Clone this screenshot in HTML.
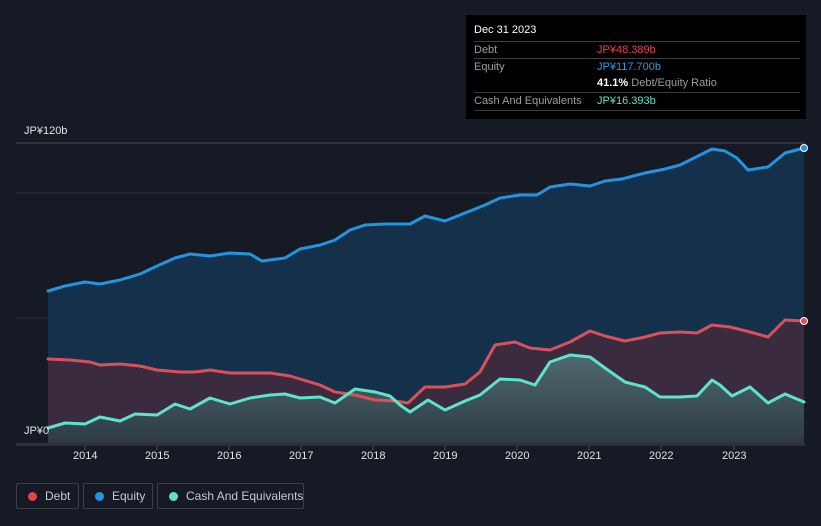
<!DOCTYPE html>
<html style="overflow:hidden;height:526px"><head><meta charset="utf-8"><style>
body{margin:0;width:821px;height:526px;background:#151a24;font-family:"Liberation Sans",sans-serif;overflow:hidden;position:relative}
.tt{position:absolute;left:466px;top:15px;width:340px;height:104px;background:#000;color:#fff;font-size:11px}
.tt .r{position:absolute;left:8px;right:6px;border-top:1px solid #3a3d42;height:17px;line-height:17px;color:#9a9ea5}
.tt span{position:absolute;left:123px}
.lg{position:absolute;top:483px;height:26px;border:1px solid #3a4049;border-radius:2px;color:#c5c9cf;font-size:12px;line-height:24px;box-sizing:border-box;white-space:nowrap}
.lg i{position:absolute;left:11px;top:8px;width:9px;height:9px;border-radius:50%}
.ax{position:absolute;top:450px;color:#e0e3e7;font-size:11px}
</style></head><body>
<svg width="821" height="526" style="position:absolute;left:0;top:0">
<defs><linearGradient id="cg" x1="0" y1="0" x2="0" y2="1"><stop offset="0" stop-color="#4e6a6e"/><stop offset="1" stop-color="#2e3a44"/></linearGradient></defs>
<line x1="16" y1="143" x2="805" y2="143" stroke="#4a4f57"/>
<line x1="16" y1="193" x2="805" y2="193" stroke="#2c323b"/>
<line x1="16" y1="318" x2="805" y2="318" stroke="#2c323b"/>
<polygon fill="#15304a" points="48,443 48,291 65,286 85,282 100,284 120,280 140,274 157,266 175,258 190,254 210,256 230,253 250,254 262,261 285,258 300,249 320,245 335,240 350,230 365,225 385,224 410,224 425,216 445,221 465,213 485,205 500,198 520,195 537,195 550,187 570,184 590,186 605,181 622,179 645,173 665,169 680,165 700,155 712,149 725,151 737,158 748,170 768,167 785,153 804,148 804,443"/>
<polygon fill="#3a2b3e" points="48,443 48,359 70,360 90,362 100,365 120,364 140,366 157,370 180,372 195,372 210,370 230,373 270,373 290,376 300,379 320,385 335,392 355,395 375,400 395,401 408,403 425,387 445,387 465,384 480,372 495,345 515,342 530,348 550,350 570,342 590,331 605,336 625,341 645,337 660,333 680,332 697,333 712,325 730,327 750,332 768,337 785,320 804,321 804,443"/>
<polygon fill="url(#cg)" points="48,443 48,428 65,423 85,424 100,417 120,421 135,414 157,415 175,404 190,409 210,398 230,404 250,398 270,395 285,394 300,398 320,397 335,403 355,389 375,392 390,396 400,405 410,412 428,400 445,410 465,401 480,395 500,379 520,380 535,385 550,362 570,355 590,357 605,368 625,382 645,387 660,397 680,397 697,396 712,380 720,385 732,396 750,387 768,403 785,394 804,402 804,443"/>
<g fill="none" stroke-width="3" stroke-linejoin="round" stroke-linecap="round">
<polyline stroke="#2394e0" points="48,291 65,286 85,282 100,284 120,280 140,274 157,266 175,258 190,254 210,256 230,253 250,254 262,261 285,258 300,249 320,245 335,240 350,230 365,225 385,224 410,224 425,216 445,221 465,213 485,205 500,198 520,195 537,195 550,187 570,184 590,186 605,181 622,179 645,173 665,169 680,165 700,155 712,149 725,151 737,158 748,170 768,167 785,153 804,148"/>
<polyline stroke="#d9505c" points="48,359 70,360 90,362 100,365 120,364 140,366 157,370 180,372 195,372 210,370 230,373 270,373 290,376 300,379 320,385 335,392 355,395 375,400 395,401 408,403 425,387 445,387 465,384 480,372 495,345 515,342 530,348 550,350 570,342 590,331 605,336 625,341 645,337 660,333 680,332 697,333 712,325 730,327 750,332 768,337 785,320 804,321"/>
<polyline stroke="#5ee3cc" points="48,428 65,423 85,424 100,417 120,421 135,414 157,415 175,404 190,409 210,398 230,404 250,398 270,395 285,394 300,398 320,397 335,403 355,389 375,392 390,396 400,405 410,412 428,400 445,410 465,401 480,395 500,379 520,380 535,385 550,362 570,355 590,357 605,368 625,382 645,387 660,397 680,397 697,396 712,380 720,385 732,396 750,387 768,403 785,394 804,402"/>
</g>
<circle cx="804" cy="148" r="3.5" fill="#2394e0" stroke="#fff" stroke-width="1"/>
<circle cx="804" cy="321" r="3.5" fill="#d9505c" stroke="#fff" stroke-width="1"/>
<rect x="16" y="443" width="789" height="3" fill="#2a313b"/>
<g stroke="#4a515b"><line x1="85" y1="446" x2="85" y2="450"/><line x1="157" y1="446" x2="157" y2="450"/><line x1="229" y1="446" x2="229" y2="450"/><line x1="301" y1="446" x2="301" y2="450"/><line x1="373" y1="446" x2="373" y2="450"/><line x1="445" y1="446" x2="445" y2="450"/><line x1="517" y1="446" x2="517" y2="450"/><line x1="589" y1="446" x2="589" y2="450"/><line x1="661" y1="446" x2="661" y2="450"/><line x1="734" y1="446" x2="734" y2="450"/></g>
</svg>
<div style="position:absolute;left:24px;top:125px;color:#e0e3e7;font-size:11px">JP¥120b</div>
<div style="position:absolute;left:24px;top:425px;color:#e0e3e7;font-size:11px">JP¥0</div>
<div class="ax" style="left:73px">2014</div><div class="ax" style="left:145px">2015</div><div class="ax" style="left:217px">2016</div><div class="ax" style="left:289px">2017</div><div class="ax" style="left:361px">2018</div><div class="ax" style="left:433px">2019</div><div class="ax" style="left:505px">2020</div><div class="ax" style="left:577px">2021</div><div class="ax" style="left:649px">2022</div><div class="ax" style="left:722px">2023</div>
<div class="tt">
<div style="position:absolute;left:8px;top:9px;font-size:11px">Dec 31 2023</div>
<div class="r" style="top:26px">Debt<span style="color:#e9414e">JP¥48.389b</span></div>
<div class="r" style="top:43px">Equity<span style="color:#2a9bea">JP¥117.700b</span></div>
<div class="r" style="top:60px;border-top:none"><span style="color:#fff"><b>41.1%</b> <span style="position:static;color:#9a9ea5">Debt/Equity Ratio</span></span></div>
<div class="r" style="top:77px">Cash And Equivalents<span style="color:#5ee3cc">JP¥16.393b</span></div>
<div class="r" style="top:95px;height:0"></div>
</div>
<div class="lg" style="left:16px;width:63px"><i style="background:#e9414e"></i><span style="position:absolute;left:28px">Debt</span></div>
<div class="lg" style="left:83px;width:70px"><i style="background:#2394e0"></i><span style="position:absolute;left:28px">Equity</span></div>
<div class="lg" style="left:157px;width:147px"><i style="background:#5ee3cc"></i><span style="position:absolute;left:28px">Cash And Equivalents</span></div>
</body></html>
